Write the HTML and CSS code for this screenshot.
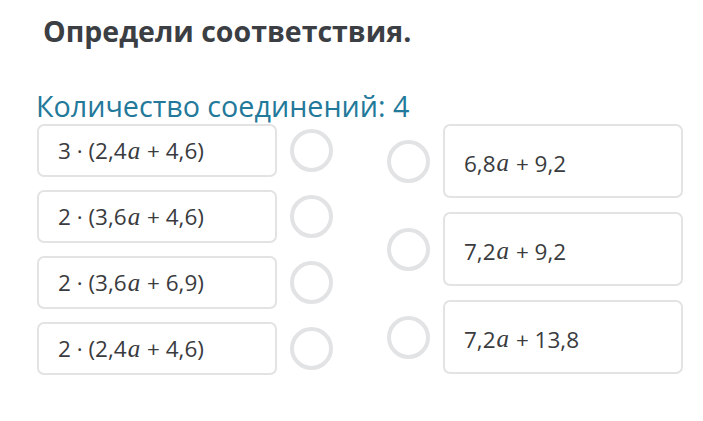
FILE: index.html
```html
<!DOCTYPE html>
<html>
  <head>
    <meta charset="UTF-8">
    <title>Определи соответствия</title>
    <link rel="stylesheet" href="styles.css">
  </head>
  <body>
    <div class="page">
      <h1 class="title">Определи соответствия.</h1>
      <div class="count">Количество соединений: 4</div>

      <div class="board">
        <!-- левая колонка -->
        <div class="col left">
          <div class="row">
            <div class="box">3 · (2,4<i class="var">a</i> + 4,6)</div>
            <span class="dot"></span>
          </div>
          <div class="row">
            <div class="box">2 · (3,6<i class="var">a</i> + 4,6)</div>
            <span class="dot"></span>
          </div>
          <div class="row">
            <div class="box">2 · (3,6<i class="var">a</i> + 6,9)</div>
            <span class="dot"></span>
          </div>
          <div class="row">
            <div class="box">2 · (2,4<i class="var">a</i> + 4,6)</div>
            <span class="dot"></span>
          </div>
        </div>

        <!-- правая колонка -->
        <div class="col right">
          <div class="row">
            <span class="dot"></span>
            <div class="box tall">6,8<i class="var">a</i> + 9,2</div>
          </div>
          <div class="row">
            <span class="dot"></span>
            <div class="box tall">7,2<i class="var">a</i> + 9,2</div>
          </div>
          <div class="row">
            <span class="dot"></span>
            <div class="box tall">7,2<i class="var">a</i> + 13,8</div>
          </div>
        </div>
      </div>
    </div>
  </body>
</html>
```

FILE: styles.css
```css
body { margin: 0; background: #fff; font-family: "Open Sans", Arial, sans-serif; color: #3a3b3e; }
.page { padding: 13px 0 0 37px; }
.title { margin: 0 0 0 6px; font-size: 28.5px; font-weight: 700; color: #3b3e43; line-height: 36px; }
.count { margin: 39px 0 0 -1px; font-size: 28.7px; color: #23799a; line-height: 36px; }
.board { display: flex; justify-content: space-between; width: 646px; margin-top: 0; }
.col { display: flex; flex-direction: column; }
.left { gap: 13px; }
.right { gap: 14px; }
.row { display: flex; align-items: center; gap: 13px; }
.box {
  width: 240px;
  height: 53px;
  box-sizing: border-box;
  border: 2px solid #e3e3e3;
  border-radius: 7px;
  padding-left: 19px;
  display: flex;
  align-items: center;
  font-size: 22.5px;
  white-space: pre;
}
.box.tall { height: 74px; padding-top: 4px; }
.var { font-family: "Liberation Serif", serif; font-style: italic; font-size: 25px; margin: 0 1px; }
.dot {
  width: 43px;
  height: 43px;
  box-sizing: border-box;
  border: 4px solid #e2e3e4;
  border-radius: 50%;
}
```
